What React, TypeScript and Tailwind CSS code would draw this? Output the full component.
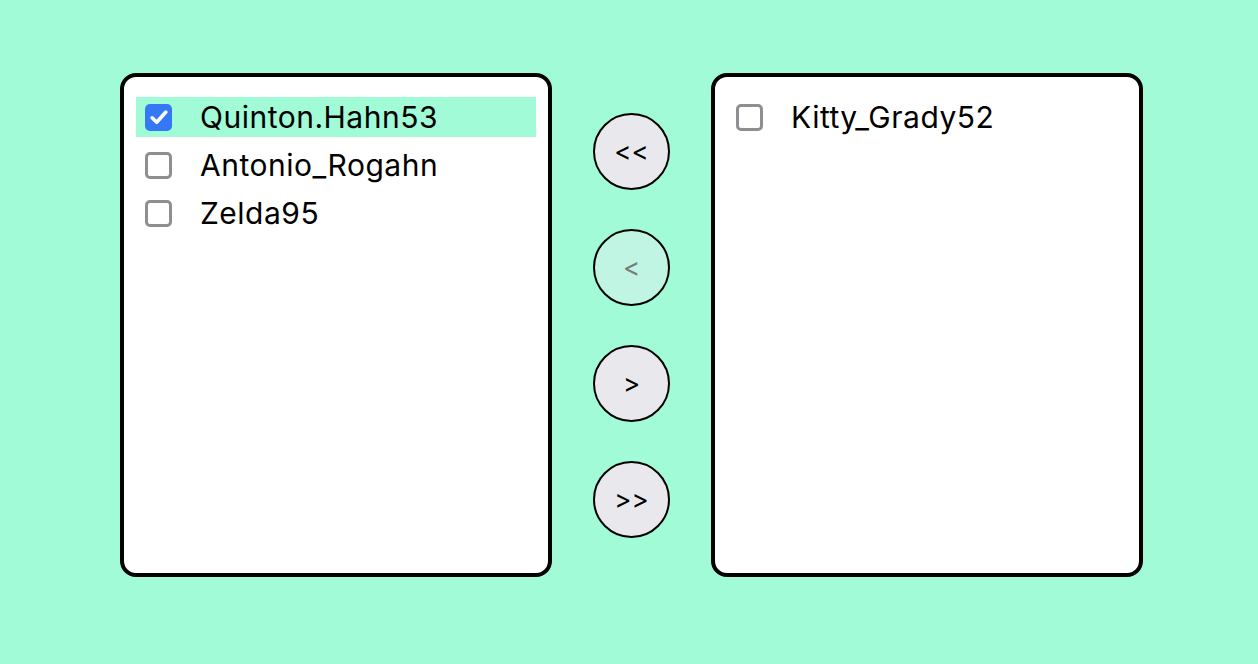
const leftItems = [
  { name: 'Quinton.Hahn53', checked: true },
  { name: 'Antonio_Rogahn', checked: false },
  { name: 'Zelda95', checked: false },
];

const rightItems = [{ name: 'Kitty_Grady52', checked: false }];

function Checkbox({ checked }: { checked: boolean }) {
  if (checked) {
    return (
      <span className="flex h-[27px] w-[27px] shrink-0 items-center justify-center rounded-[5px] bg-[#3478f6]">
        <svg width="22" height="22" viewBox="0 0 16 16" fill="none">
          <path d="M3 8.6l3.3 3.2L13 4.4" stroke="white" strokeWidth="2.6" strokeLinecap="round" strokeLinejoin="round" />
        </svg>
      </span>
    );
  }
  return <span className="h-[27px] w-[27px] shrink-0 rounded-[5px] border-[3px] border-[#8e8e93] bg-white" />;
}

function ListPanel({ items }: { items: { name: string; checked: boolean }[] }) {
  return (
    <div className="h-[504px] w-[432px] rounded-[16px] border-4 border-black bg-white px-[12px] pt-[20px]">
      <ul className="flex flex-col gap-[8px]">
        {items.map((item) => (
          <li
            key={item.name}
            className={`flex h-[40px] items-center gap-[28px] pl-[9px] ${item.checked ? 'bg-[#a0fbd6]' : ''}`}
          >
            <Checkbox checked={item.checked} />
            <span className="text-[30px] leading-none tracking-[0.5px] text-black">{item.name}</span>
          </li>
        ))}
      </ul>
    </div>
  );
}

function MoveButton({ label, disabled }: { label: string; disabled?: boolean }) {
  return (
    <button
      className={`flex h-[77px] w-[77px] items-center justify-center rounded-full border-2 border-black text-[26px] ${
        disabled ? 'bg-[#c1f5e3] text-[#7a7a7a]' : 'bg-[#e9e9ed] text-black'
      }`}
    >
      {label}
    </button>
  );
}

export default function App() {
  return (
    <div
      className="flex h-[664px] w-full justify-center gap-[41px] bg-[#a0fbd6] pl-[5px] pt-[73px]"
      style={{ fontFamily: 'Inter, "Noto Sans", sans-serif' }}
    >
      <ListPanel items={leftItems} />
      <div className="flex h-[504px] flex-col items-center justify-center gap-[39px]">
        <MoveButton label="<<" />
        <MoveButton label="<" disabled />
        <MoveButton label=">" />
        <MoveButton label=">>" />
      </div>
      <ListPanel items={rightItems} />
    </div>
  );
}
